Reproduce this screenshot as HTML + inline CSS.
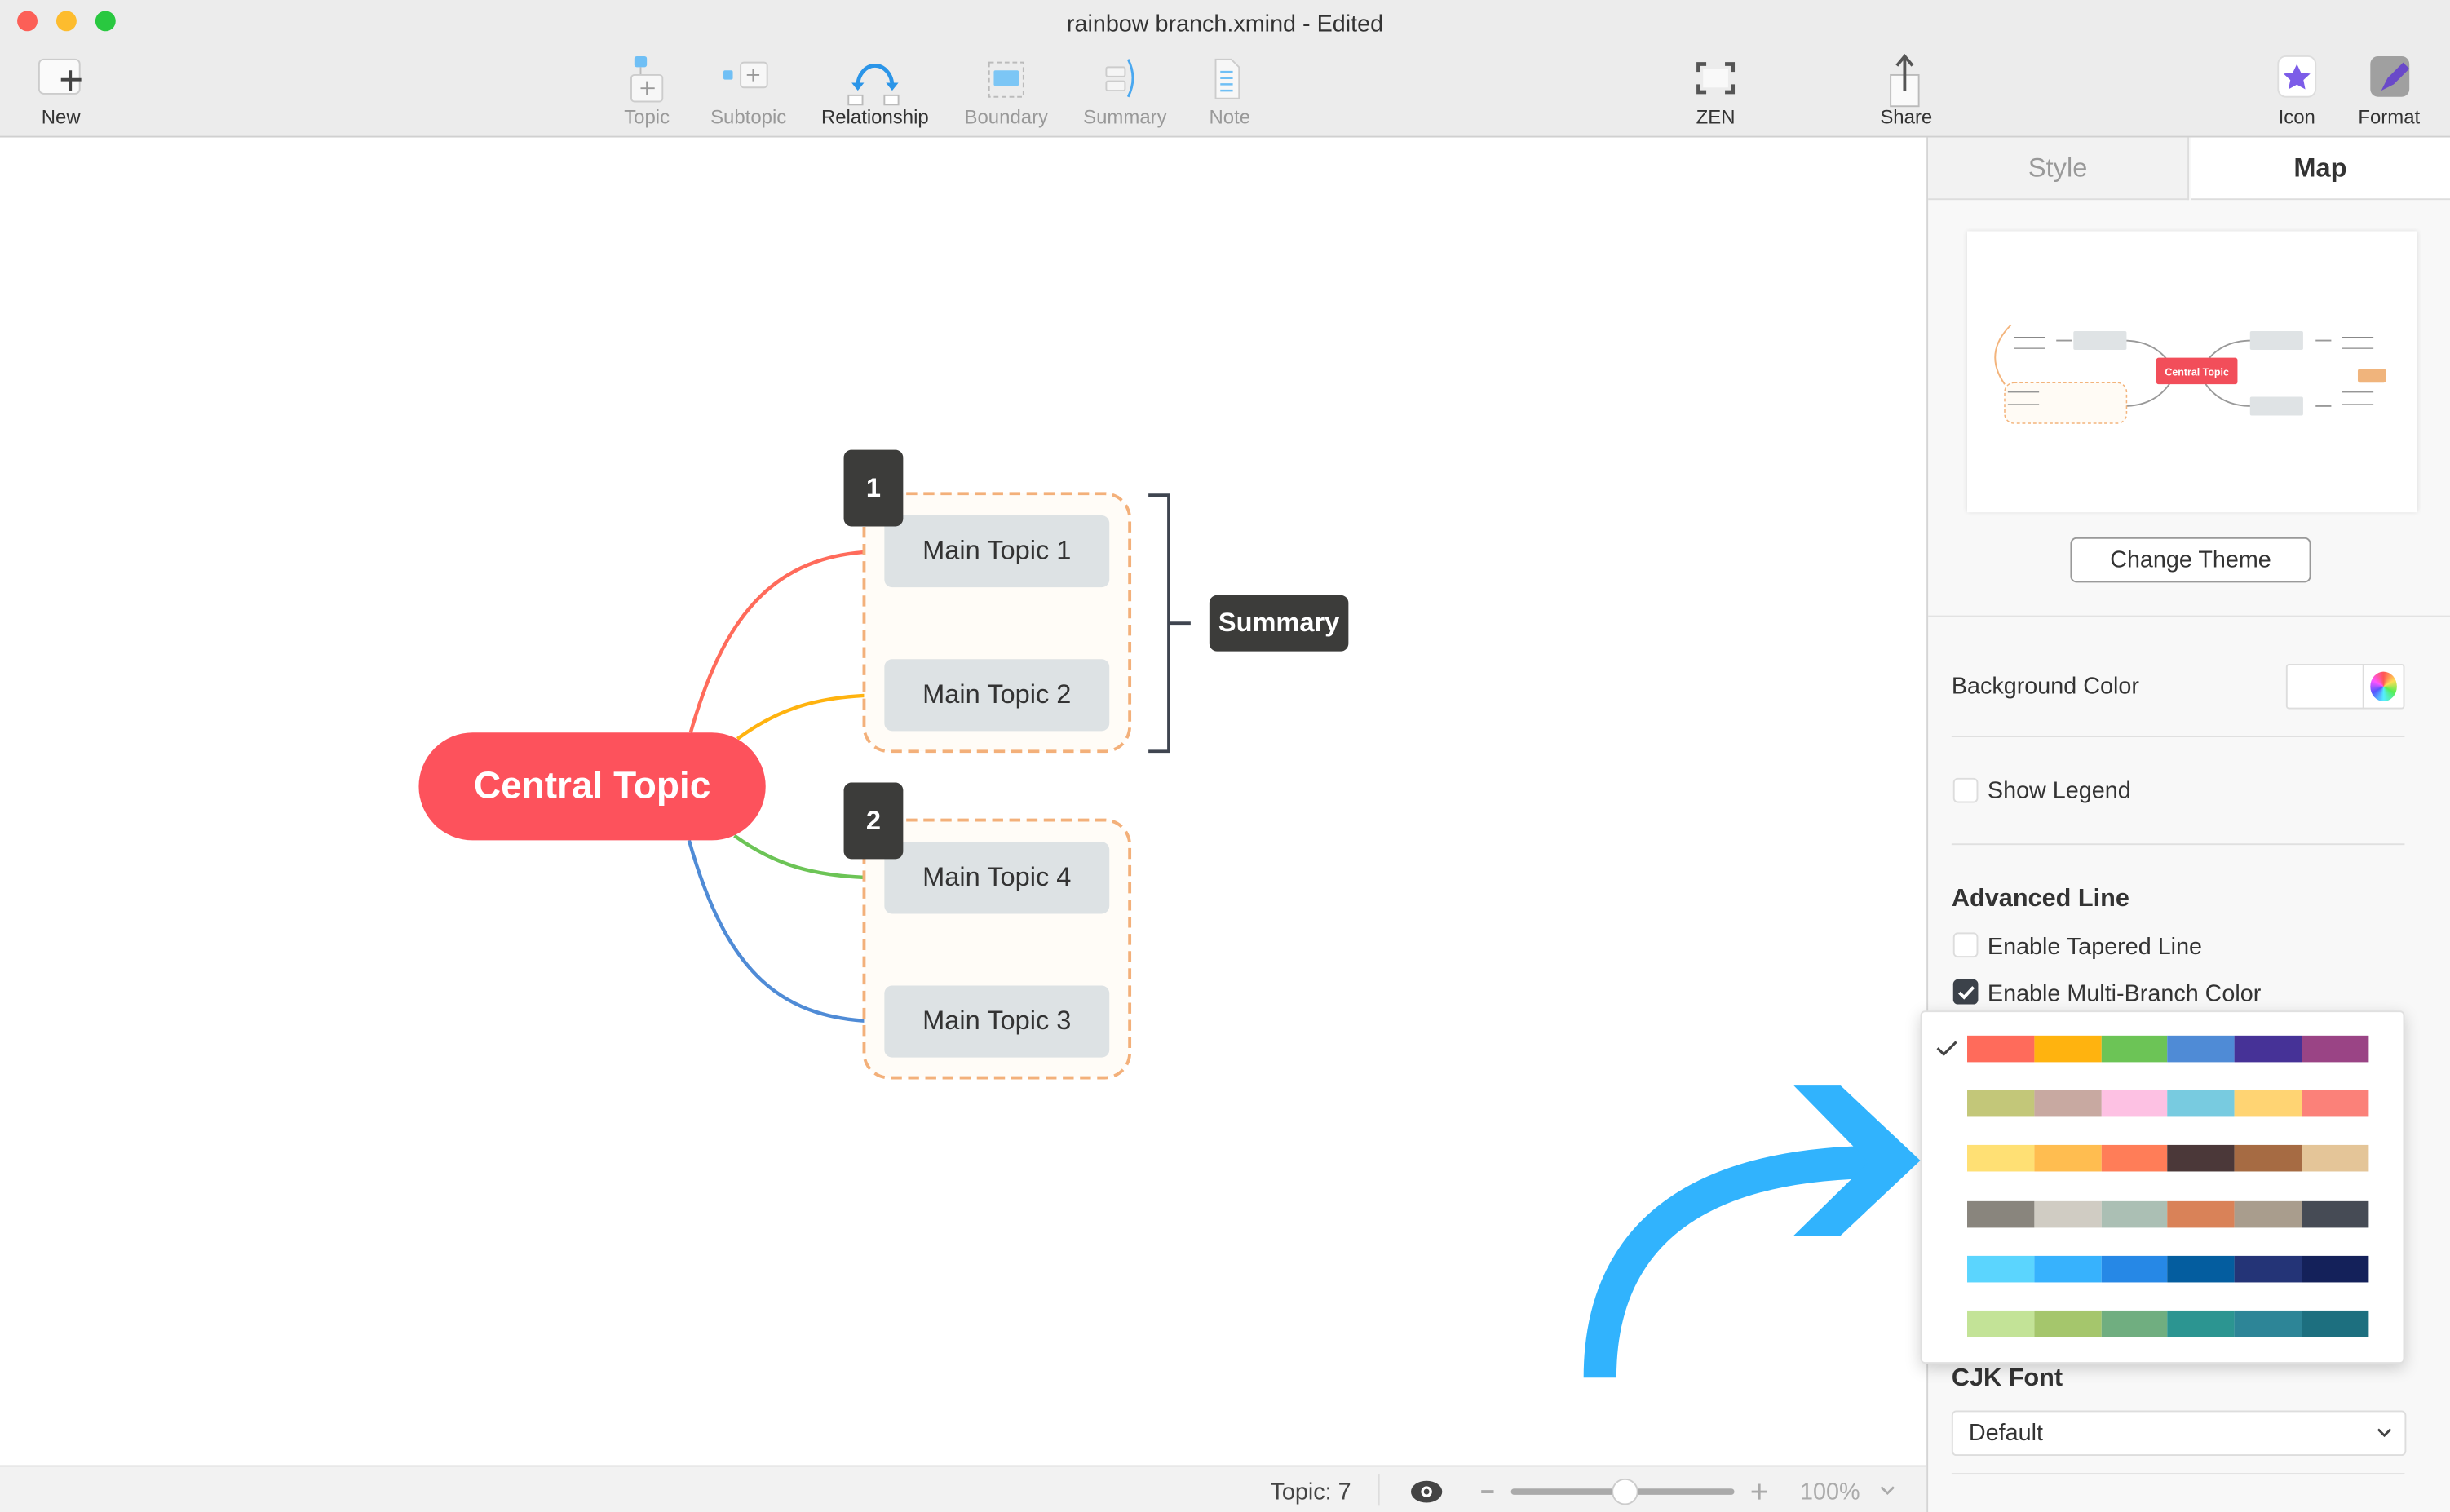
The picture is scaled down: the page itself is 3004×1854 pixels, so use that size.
<!DOCTYPE html>
<html><head><meta charset="utf-8"><style>
*{margin:0;padding:0;box-sizing:border-box}
html,body{width:3004px;height:1854px;overflow:hidden;background:#fff}
#w{position:absolute;left:0;top:0;width:1568px;height:968px;transform:scale(1.91582,1.91529);transform-origin:0 0;font-family:"Liberation Sans",sans-serif;color:#333}
.a{position:absolute}
.tl{font-size:12.5px;color:#999;text-align:center;width:80px}
.sw{position:absolute;height:17px;width:257px;left:1259px;display:flex}
.sw i{flex:1}
.cb{position:absolute;width:16px;height:16px;border:1px solid #ddd;background:#fff;border-radius:3px}
.lbl{position:absolute;font-size:15px;color:#333}
.mt{position:absolute;left:566px;width:144px;height:46px;background:#dde2e4;border-radius:5px;font-size:17px;color:#333;text-align:center;line-height:46px}
</style></head><body><div id="w">
<div class="a" style="left:0;top:0;width:1568px;height:88px;background:#ececec;border-bottom:1px solid #d0d0d0"></div>
<div class="a" style="left:11px;top:7px;width:13px;height:13px;border-radius:50%;background:#fc5f57"></div>
<div class="a" style="left:36px;top:7px;width:13px;height:13px;border-radius:50%;background:#fdbc2e"></div>
<div class="a" style="left:61px;top:7px;width:13px;height:13px;border-radius:50%;background:#29c840"></div>
<div class="a" style="left:0;top:7px;width:1568px;text-align:center;font-size:15px;color:#333">rainbow branch.xmind - Edited</div>
<svg class="a" style="left:0;top:0" width="1568" height="88">
<rect x="25" y="38" width="26" height="22" rx="3" fill="#fafafa" stroke="#ccc"/>
<path d="M45 45v13M39 51h13" stroke="#444" stroke-width="2"/>
<rect x="406" y="36" width="8" height="7" rx="1.5" fill="#6fbff5"/><path d="M410 43v5" stroke="#bbb"/>
<rect x="404" y="48" width="20" height="17" rx="2" fill="#f7f7f7" stroke="#ccc"/><path d="M414 52v9M410 56.5h9" stroke="#999"/>
<rect x="463" y="45" width="6" height="6" rx="1" fill="#6fbff5"/><rect x="474" y="40" width="17" height="16" rx="2" fill="#f7f7f7" stroke="#ccc"/><path d="M482 44v8M478 48h8" stroke="#999"/>
<path d="M549 55 A11 13 0 0 1 571 55" fill="none" stroke="#2b95e8" stroke-width="2.5"/><path d="M545 53l4 5 4-5zM567 53l4 5 4-5z" fill="#2b95e8"/>
<rect x="543" y="61" width="9" height="6" fill="#fff" stroke="#bbb"/><rect x="566" y="61" width="9" height="6" fill="#fff" stroke="#bbb"/>
<rect x="633" y="40" width="22" height="22" fill="none" stroke="#bbb" stroke-dasharray="3 2"/><rect x="636" y="45" width="16" height="10" rx="1" fill="#7cc6f5"/>
<rect x="708" y="43" width="12" height="6" rx="1" fill="#f5f5f5" stroke="#ccc"/><rect x="708" y="52" width="12" height="6" rx="1" fill="#f5f5f5" stroke="#ccc"/><path d="M722 38q6 12 0 24" fill="none" stroke="#4aa8f0" stroke-width="1.5"/>
<path d="M778 38h10l5 5v20h-15z" fill="#f7f7f7" stroke="#ccc"/><path d="M781 46h8M781 50h8M781 54h8M781 58h8" stroke="#6fbff5" stroke-width="1.3"/>
<path d="M1087 46v-5h5M1104 41h5v5M1109 54v5h-5M1092 59h-5v-5" fill="none" stroke="#555" stroke-width="2.5"/><rect x="1090" y="44" width="16" height="12" fill="#f9f9f9"/>
<rect x="1210" y="48" width="18" height="20" fill="#fafafa" stroke="#bbb"/><path d="M1219 36v22M1214 42l5-6 5 6" fill="none" stroke="#555" stroke-width="2"/>
<rect x="1458" y="36" width="24" height="26" rx="5" fill="#fff" stroke="#ddd"/><path d="M1470 41l2.6 5.5 6 .7-4.4 4 1.2 6-5.4-3-5.4 3 1.2-6-4.4-4 6-.7z" fill="#7c5ce8"/>
<rect x="1517" y="36" width="25" height="26" rx="5" fill="#a0a0a0"/><path d="M1538 40l-10 10-4 8 8-4 10-10z" fill="#6a49c9"/>
</svg>
<div class="a tl" style="left:-1px;top:68px;color:#333">New</div>
<div class="a tl" style="left:374px;top:68px">Topic</div>
<div class="a tl" style="left:439px;top:68px">Subtopic</div>
<div class="a tl" style="left:520px;top:68px;color:#333">Relationship</div>
<div class="a tl" style="left:604px;top:68px">Boundary</div>
<div class="a tl" style="left:680px;top:68px">Summary</div>
<div class="a tl" style="left:747px;top:68px">Note</div>
<div class="a tl" style="left:1058px;top:68px;color:#333">ZEN</div>
<div class="a tl" style="left:1180px;top:68px;color:#333">Share</div>
<div class="a tl" style="left:1430px;top:68px;color:#333">Icon</div>
<div class="a tl" style="left:1489px;top:68px;color:#333">Format</div>
<div class="a" style="left:0;top:938px;width:1233px;height:30px;background:#f2f2f2;border-top:1px solid #ddd"></div>
<div class="a" style="left:813px;top:947px;font-size:15px;color:#444">Topic: 7</div>
<div class="a" style="left:882px;top:944px;width:1px;height:20px;background:#ddd"></div>
<svg class="a" style="left:900px;top:945px" width="320" height="20"><ellipse cx="13" cy="10" rx="10" ry="7" fill="#444"/><circle cx="13" cy="10" r="3.5" fill="#fff"/><circle cx="13" cy="10" r="1.8" fill="#444"/>
<path d="M48 10h8" stroke="#aaa" stroke-width="2"/><rect x="67" y="8" width="143" height="4" rx="2" fill="#aaa"/><circle cx="140" cy="10" r="8" fill="#fff" stroke="#ccc"/><path d="M221 10h10M226 5v10" stroke="#aaa" stroke-width="1.5"/><path d="M304 7l4 4 4-4" fill="none" stroke="#aaa" stroke-width="1.5"/></svg>
<div class="a" style="left:1152px;top:947px;font-size:15px;color:#aaa">100%</div>
<div class="a" style="left:1233px;top:88px;width:335px;height:880px;background:#f8f8f8;border-left:1px solid #d5d5d5"></div>
<div class="a" style="left:1234px;top:88px;width:167px;height:40px;background:#f2f2f2;border-right:1px solid #ddd;border-bottom:1px solid #ddd;text-align:center;line-height:40px;font-size:17px;color:#999">Style</div>
<div class="a" style="left:1402px;top:88px;width:166px;height:40px;background:#fff;border-bottom:1px solid #ddd;text-align:center;line-height:40px;font-size:17px;font-weight:bold;color:#333">Map</div>
<div class="a" style="left:1259px;top:148px;width:288px;height:180px;background:#fff;box-shadow:0 0 3px rgba(0,0,0,.12)"></div>
<svg class="a" style="left:1259px;top:148px" width="288" height="180">
<g fill="none" stroke="#999" stroke-width="1"><path d="M130 85q-10-15-30-15M152 85q10-15 30-15M130 97q-10 15-30 15M152 97q10 15 30 15M67 70h-10M223 70h10M62 112h-10M223 112h10"/></g>
<rect x="121" y="81" width="52" height="17" rx="1.5" fill="#f24e5a"/><text x="147" y="92.5" font-size="6.5" fill="#fff" font-weight="bold" text-anchor="middle" font-family="Liberation Sans">Central Topic</text>
<rect x="68" y="64" width="34" height="12" rx="1" fill="#dfe3e5"/><rect x="181" y="64" width="34" height="12" rx="1" fill="#dfe3e5"/><rect x="63" y="106" width="34" height="12" rx="1" fill="#dfe3e5"/><rect x="181" y="106" width="34" height="12" rx="1" fill="#dfe3e5"/>
<rect x="24" y="97" width="78" height="26" rx="6" fill="#fffbf5" stroke="#f3b47c" stroke-dasharray="2 1.5" stroke-width=".8"/>
<path d="M24 98q-14-20 4-38" fill="none" stroke="#f3b47c"/>
<rect x="250" y="88" width="18" height="9" rx="1.5" fill="#f0b47c"/>
<g stroke="#888" stroke-width=".7"><path d="M30 68h20M30 75h20M26 103h20M26 111h20M240 68h20M240 75h20M240 103h20M240 111h20"/></g>
</svg>
<div class="a" style="left:1325px;top:344px;width:154px;height:29px;border:1px solid #999;border-radius:4px;background:#fff;text-align:center;line-height:27px;font-size:15px;color:#333">Change Theme</div>
<div class="a" style="left:1234px;top:394px;width:334px;height:1px;background:#e2e2e2"></div>
<div class="lbl" style="left:1249px;top:431px">Background Color</div>
<div class="a" style="left:1463px;top:425px;width:76px;height:29px;border:1px solid #ddd;background:#fff;border-radius:2px"></div>
<div class="a" style="left:1512px;top:425px;width:1px;height:29px;background:#ddd"></div>
<div class="a" style="left:1517px;top:430px;width:17px;height:19px;border-radius:50%;background:conic-gradient(#f55,#fd5,#5e5,#5ef,#55f,#f5f,#f55)"></div>
<div class="a" style="left:1249px;top:471px;width:290px;height:1px;background:#e0e0e0"></div>
<div class="cb" style="left:1250px;top:498px"></div><div class="lbl" style="left:1272px;top:498px">Show Legend</div>
<div class="a" style="left:1249px;top:540px;width:290px;height:1px;background:#e0e0e0"></div>
<div class="lbl" style="left:1249px;top:567px;font-weight:bold;font-size:16px">Advanced Line</div>
<div class="cb" style="left:1250px;top:597px"></div><div class="lbl" style="left:1272px;top:598px">Enable Tapered Line</div>
<div class="cb" style="left:1250px;top:627px;background:#3c424a;border-color:#3c424a"></div>
<svg class="a" style="left:1250px;top:627px" width="17" height="17"><path d="M4 8.5l3 3 6-6.5" fill="none" stroke="#fff" stroke-width="2"/></svg>
<div class="lbl" style="left:1272px;top:628px">Enable Multi-Branch Color</div>
<div class="lbl" style="left:1249px;top:874px;font-weight:bold;font-size:16px">CJK Font</div>
<div class="a" style="left:1249px;top:903px;width:291px;height:29px;border:1px solid #ddd;background:#fff;border-radius:3px;font-size:15px;line-height:28px;padding-left:10px">Default</div>
<svg class="a" style="left:1520px;top:912px" width="12" height="10"><path d="M2 3l4 4 4-4" fill="none" stroke="#444" stroke-width="1.5"/></svg>
<div class="a" style="left:1249px;top:943px;width:290px;height:1px;background:#e0e0e0"></div>
<div class="a" style="left:1229px;top:647px;width:310px;height:226px;background:#fff;border:1px solid #e0e0e0;box-shadow:0 3px 10px rgba(0,0,0,.18);border-radius:3px"></div>
<svg class="a" style="left:1239px;top:665px" width="14" height="12"><path d="M1 6l4 4 8-8" fill="none" stroke="#444" stroke-width="1.6"/></svg>
<div class="sw" style="top:663px"><i style="background:#ff6b5b"></i><i style="background:#ffb30f"></i><i style="background:#6cc456"></i><i style="background:#4f8bd6"></i><i style="background:#463297"></i><i style="background:#9a4485"></i></div>
<div class="sw" style="top:698px"><i style="background:#c3c779"></i><i style="background:#c8a9a1"></i><i style="background:#fdc1e3"></i><i style="background:#78cbe0"></i><i style="background:#ffd473"></i><i style="background:#fb8179"></i></div>
<div class="sw" style="top:733px"><i style="background:#ffe074"></i><i style="background:#ffbd50"></i><i style="background:#ff7d58"></i><i style="background:#4b3839"></i><i style="background:#a66b43"></i><i style="background:#e4c598"></i></div>
<div class="sw" style="top:769px"><i style="background:#89857d"></i><i style="background:#d0ccc3"></i><i style="background:#abbfb4"></i><i style="background:#d98258"></i><i style="background:#a99d8d"></i><i style="background:#464b55"></i></div>
<div class="sw" style="top:804px"><i style="background:#5bd5fe"></i><i style="background:#37b2fd"></i><i style="background:#2688e6"></i><i style="background:#045d9f"></i><i style="background:#243477"></i><i style="background:#14215a"></i></div>
<div class="sw" style="top:839px"><i style="background:#c3e397"></i><i style="background:#a5c66c"></i><i style="background:#70ae80"></i><i style="background:#2c9591"></i><i style="background:#2d8597"></i><i style="background:#1d6f7f"></i></div>
<svg class="a" style="left:0;top:88px" width="1233" height="850">
<g fill="none" stroke-width="2.3">
<path d="M442 381C465 300 500 265 566 265" stroke="#ff6b5b"/>
<path d="M472 385C495 368 520 357 566 357" stroke="#ffb30f"/>
<path d="M470 447C495 465 520 474 566 474" stroke="#6cc456"/>
<path d="M441 450C465 535 500 566 566 566" stroke="#4f8bd6"/>
</g>
<rect x="553" y="228" width="170" height="165" rx="16" fill="#fffcf7" stroke="#f3b07a" stroke-width="2" stroke-dasharray="7 4"/>
<rect x="553" y="437" width="170" height="165" rx="16" fill="#fffcf7" stroke="#f3b07a" stroke-width="2" stroke-dasharray="7 4"/>
<path d="M735 229h13v164h-13M748 311h14" fill="none" stroke="#3f4550" stroke-width="2"/>
</svg>
<div class="mt" style="top:330px">Main Topic 1</div>
<div class="mt" style="top:422px">Main Topic 2</div>
<div class="mt" style="top:539px">Main Topic 4</div>
<div class="mt" style="top:631px">Main Topic 3</div>
<div class="a" style="left:540px;top:288px;width:38px;height:49px;background:#3c3c3a;border-radius:5px;color:#fff;font-weight:bold;font-size:17px;text-align:center;line-height:49px">1</div>
<div class="a" style="left:540px;top:501px;width:38px;height:49px;background:#3c3c3a;border-radius:5px;color:#fff;font-weight:bold;font-size:17px;text-align:center;line-height:49px">2</div>
<div class="a" style="left:774px;top:381px;width:89px;height:36px;background:#3c3c3a;border-radius:5px;color:#fff;font-weight:bold;font-size:17px;text-align:center;line-height:36px">Summary</div>
<div class="a" style="left:268px;top:469px;width:222px;height:69px;background:#fd525c;border-radius:35px;color:#fff;font-weight:bold;font-size:24px;text-align:center;line-height:69px">Central Topic</div>
<svg class="a" style="left:0;top:0" width="1568" height="968">
<path d="M1024 882C1024 795 1080 744 1205 744" fill="none" stroke="#31b3fd" stroke-width="21"/>
<path d="M1148 695H1178L1229 743L1178 791H1148L1196 744Z" fill="#31b3fd"/>
</svg>
</div></body></html>
